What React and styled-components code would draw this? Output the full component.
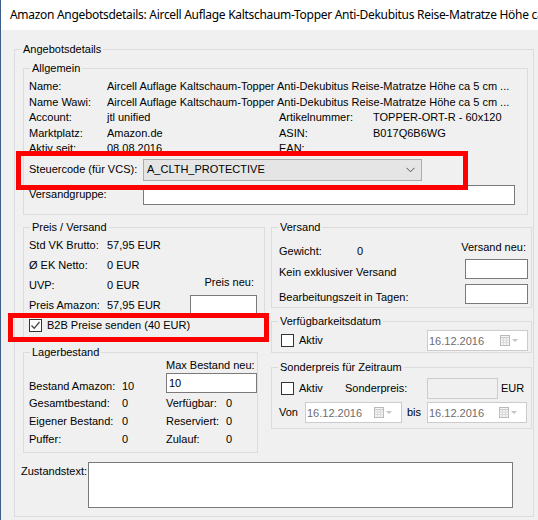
import React from "react";
import styled, { createGlobalStyle } from "styled-components";

const GlobalStyle = createGlobalStyle`
  html, body {
    margin: 0;
    padding: 0;
    background: #f0f0f0;
  }
`;

const Window = styled.div`
  position: relative;
  width: 538px;
  height: 520px;
  overflow: hidden;
  box-sizing: border-box;
  background: #f0f0f0;
  border-left: 1px solid #3b5f8a;
  font-family: "Liberation Sans", Arial, sans-serif;
  font-size: 11px;
  color: #000;
  display: flex;
  flex-direction: column;
`;

const TitleBar = styled.div`
  height: 30px;
  flex: 0 0 30px;
  background: #fff;
  padding: 0 0 2px 9px;
  box-sizing: border-box;
  display: flex;
  align-items: center;
  white-space: nowrap;
  overflow: hidden;
  font-family: "Noto Sans", "Open Sans", sans-serif;
  font-size: 12px;
  letter-spacing: -0.3px;
`;

const Body = styled.div`
  flex: 1;
  padding: 13px 0 0 13px;
`;

const Group = styled.fieldset`
  margin: 0;
  padding: 0;
  min-width: 0;
  box-sizing: border-box;
  border: 1px solid #dcdcdc;
  width: ${(p) => p.$w}px;
  height: ${(p) => p.$h}px;
  margin-top: ${(p) => p.$mt || 0}px;
`;

const Legend = styled.legend`
  margin-left: 6px;
  padding: 0 2px;
  line-height: 13px;
  font-size: 11px;
`;

const Inner = styled.div`
  display: flex;
  flex-direction: column;
  padding: ${(p) => p.$pad || "0"};
`;

const InfoGrid = styled.div`
  display: grid;
  grid-template-columns: 78px 172px 94px 1fr;
  grid-auto-rows: 15.5px;
  align-items: center;
  white-space: nowrap;
  line-height: 13px;

  .wide {
    grid-column: 2 / 5;
  }
`;

const FieldRow = styled.div`
  display: flex;
  align-items: center;
  margin-top: ${(p) => p.$mt || 0}px;
  line-height: 13px;
`;

const Label = styled.span`
  width: ${(p) => (p.$w ? `${p.$w}px` : "auto")};
  margin-left: ${(p) => p.$ml || 0}px;
  flex: 0 0 auto;
  white-space: nowrap;
  line-height: 13px;
`;

const Combo = styled.div`
  width: 279px;
  height: 22px;
  box-sizing: border-box;
  background: #e5e5e5;
  border: 1px solid #acacac;
  display: flex;
  align-items: center;
  justify-content: space-between;
  padding: 0 6px 0 3px;
  font-size: 11px;
`;

const TextBox = styled.div`
  width: ${(p) => p.$w}px;
  height: ${(p) => p.$h || 20}px;
  box-sizing: border-box;
  background: ${(p) => (p.$disabled ? "#f0f0f0" : "#fff")};
  border: 1px solid ${(p) => (p.$disabled ? "#cccccc" : "#7a7a7a")};
  padding: 2px 2px;
  line-height: 14px;
  font-size: 11px;
`;

const Middle = styled.div`
  display: flex;
  gap: 6px;
  margin-top: 6px;
`;

const Column = styled.div`
  display: flex;
  flex-direction: column;
`;

const PriceGrid = styled.div`
  display: grid;
  grid-template-columns: 78px auto;
  grid-auto-rows: 20px;
  align-items: center;
  white-space: nowrap;
  line-height: 13px;
`;

const PriceTop = styled.div`
  display: flex;
  justify-content: space-between;
  align-items: flex-end;
  padding: 1px 7px 0 5px;
`;

const NewPrice = styled.div`
  display: flex;
  flex-direction: column;
  align-items: flex-end;

  span {
    line-height: 13px;
    padding-right: 3px;
    margin-bottom: 6px;
  }
`;

const CheckRow = styled.label`
  display: flex;
  align-items: center;
  gap: 5px;
  width: ${(p) => (p.$w ? `${p.$w}px` : "auto")};
  margin: ${(p) => p.$m || "0"};
  line-height: 13px;
  white-space: nowrap;
`;

const Box = styled.span`
  width: 13px;
  height: 13px;
  box-sizing: border-box;
  border: 1px solid #333;
  background: #fff;
  display: flex;
  align-items: center;
  justify-content: center;
  flex: 0 0 13px;
`;

const StockGrid = styled.div`
  display: grid;
  grid-template-columns: 93px 44px 60px 1fr;
  grid-template-rows: 14px 20px 20px 17.5px 17.5px;
  align-items: center;
  white-space: nowrap;
  line-height: 13px;
  padding-left: 5px;

  .head {
    grid-column: 3 / 5;
    align-self: start;
  }
  .box {
    grid-column: 3 / 5;
    grid-row: 2;
  }
  .low {
    grid-row: 2;
    align-self: end;
  }
`;

const ShipGrid = styled.div`
  display: grid;
  grid-template-columns: 1fr 63px;
  grid-template-rows: 20px 20px 20px;
  row-gap: 5px;
  padding: 0 3px 0 7px;
  white-space: nowrap;
  line-height: 13px;

  .weight {
    grid-row: 1;
    grid-column: 1;
    align-self: end;
    margin-bottom: -4px;
    display: flex;
  }
  .neu {
    grid-row: 1;
    grid-column: 1 / 3;
    justify-self: end;
    align-self: end;
    padding-right: 2px;
  }
  .lbl {
    grid-column: 1;
    align-self: end;
  }
`;

const DateRow = styled.div`
  display: flex;
  align-items: center;
  justify-content: ${(p) => p.$justify || "flex-start"};
  padding: ${(p) => p.$pad || "0"};
  margin-top: ${(p) => p.$mt || 0}px;
  white-space: nowrap;
`;

const Picker = styled.div`
  width: ${(p) => p.$w}px;
  height: 21px;
  box-sizing: border-box;
  border: 1px solid #cccccc;
  background: #fff;
  color: #6d6d6d;
  display: flex;
  align-items: center;
  justify-content: space-between;
  padding: 0 8px 0 1px;
  font-size: 11px;
`;

const StateRow = styled.div`
  display: flex;
  margin: 9px 0 0 -2px;

  span {
    width: 67px;
    margin-top: 3px;
    line-height: 13px;
  }
`;

const Marker = styled.div`
  position: absolute;
  left: ${(p) => p.$x}px;
  top: ${(p) => p.$y}px;
  width: ${(p) => p.$w}px;
  height: ${(p) => p.$h}px;
  box-sizing: border-box;
  border: 5px solid #ff0000;
  pointer-events: none;
`;

const Chevron = () => (
  <svg width="9" height="6" viewBox="0 0 9 6">
    <polyline points="0.5,0.8 4.5,4.8 8.5,0.8" fill="none" stroke="#505050" strokeWidth="1" />
  </svg>
);

const Check = () => (
  <svg width="11" height="11" viewBox="0 0 11 11">
    <polyline points="1.5,5.5 4.2,8.3 9.5,2" fill="none" stroke="#444" strokeWidth="1.3" />
  </svg>
);

const CalendarIcon = () => (
  <svg width="19" height="11" viewBox="0 0 19 11">
    <rect x="0.5" y="0.5" width="9" height="10" fill="#f4f4f4" stroke="#b8b8b8" />
    <line x1="0.5" y1="2.5" x2="9.5" y2="2.5" stroke="#c8c8c8" />
    <line x1="0.5" y1="5" x2="9.5" y2="5" stroke="#dadada" />
    <line x1="0.5" y1="7.5" x2="9.5" y2="7.5" stroke="#dadada" />
    <line x1="3.5" y1="2.5" x2="3.5" y2="10.5" stroke="#dadada" />
    <line x1="6.5" y1="2.5" x2="6.5" y2="10.5" stroke="#dadada" />
    <polygon points="12,4 18,4 15,7" fill="#c4c4c4" />
  </svg>
);

const CheckBox = ({ checked }) => <Box>{checked && <Check />}</Box>;

const DatePicker = ({ w }) => (
  <Picker $w={w}>
    <span>16.12.2016</span>
    <CalendarIcon />
  </Picker>
);

export default function App() {
  return (
    <Window>
      <GlobalStyle />
      <TitleBar>
        <span>
          Amazon Angebotsdetails: Aircell Auflage Kaltschaum-Topper Anti-Dekubitus Reise-Matratze Höhe ca 5 cm
        </span>
      </TitleBar>
      <Body>
        <Group $w={520} $h={474}>
          <Legend>Angebotsdetails</Legend>
          <Inner $pad="6px 0 0 8px">
            <Group $w={505} $h={153}>
              <Legend>Allgemein</Legend>
              <Inner $pad="4px 0 0 5px">
                <InfoGrid>
                  <span>Name:</span>
                  <span className="wide">
                    Aircell Auflage Kaltschaum-Topper Anti-Dekubitus Reise-Matratze Höhe ca 5 cm ...
                  </span>
                  <span>Name Wawi:</span>
                  <span className="wide">
                    Aircell Auflage Kaltschaum-Topper Anti-Dekubitus Reise-Matratze Höhe ca 5 cm ...
                  </span>
                  <span>Account:</span>
                  <span>jtl unified</span>
                  <span>Artikelnummer:</span>
                  <span>TOPPER-ORT-R - 60x120</span>
                  <span>Marktplatz:</span>
                  <span>Amazon.de</span>
                  <span>ASIN:</span>
                  <span>B017Q6B6WG</span>
                  <span>Aktiv seit:</span>
                  <span>08.08.2016</span>
                  <span>EAN:</span>
                  <span></span>
                </InfoGrid>
                <FieldRow $mt={2}>
                  <Label $w={114}>Steuercode (für VCS):</Label>
                  <Combo>
                    <span>A_CLTH_PROTECTIVE</span>
                    <Chevron />
                  </Combo>
                </FieldRow>
                <FieldRow $mt={4}>
                  <Label $w={114}>Versandgruppe:</Label>
                  <TextBox $w={372} />
                </FieldRow>
              </Inner>
            </Group>

            <Middle>
              <Column>
                <Group $w={242} $h={118}>
                  <Legend>Preis / Versand</Legend>
                  <PriceTop>
                    <PriceGrid>
                      <span>Std VK Brutto:</span>
                      <span>57,95 EUR</span>
                      <span>Ø EK Netto:</span>
                      <span>0 EUR</span>
                      <span>UVP:</span>
                      <span>0 EUR</span>
                      <span>Preis Amazon:</span>
                      <span>57,95 EUR</span>
                    </PriceGrid>
                    <NewPrice>
                      <span>Preis neu:</span>
                      <TextBox $w={67} />
                    </NewPrice>
                  </PriceTop>
                  <CheckRow $m="4px 0 0 5px">
                    <CheckBox checked />
                    <span>B2B Preise senden (40 EUR)</span>
                  </CheckRow>
                </Group>

                <Group $w={235} $h={107} $mt={7}>
                  <Legend>Lagerbestand</Legend>
                  <StockGrid>
                    <span className="head">Max Bestand neu:</span>
                    <span className="low">Bestand Amazon:</span>
                    <span className="low">10</span>
                    <TextBox className="box" $w={91}>10</TextBox>
                    <span>Gesamtbestand:</span>
                    <span>0</span>
                    <span>Verfügbar:</span>
                    <span>0</span>
                    <span>Eigener Bestand:</span>
                    <span>0</span>
                    <span>Reserviert:</span>
                    <span>0</span>
                    <span>Puffer:</span>
                    <span>0</span>
                    <span>Zulauf:</span>
                    <span>0</span>
                  </StockGrid>
                </Group>
              </Column>

              <Column>
                <Group $w={261} $h={87}>
                  <Legend>Versand</Legend>
                  <ShipGrid>
                    <div className="weight">
                      <Label $w={78}>Gewicht:</Label>
                      <span>0</span>
                    </div>
                    <span className="neu">Versand neu:</span>
                    <span className="lbl">Kein exklusiver Versand</span>
                    <TextBox $w={63} />
                    <span className="lbl">Bearbeitungszeit in Tagen:</span>
                    <TextBox $w={63} />
                  </ShipGrid>
                </Group>

                <Group $w={261} $h={38} $mt={7}>
                  <Legend>Verfügbarkeitsdatum</Legend>
                  <DateRow $justify="space-between" $pad="2px 3px 0 9px">
                    <CheckRow>
                      <CheckBox />
                      <span>Aktiv</span>
                    </CheckRow>
                    <DatePicker w={101} />
                  </DateRow>
                </Group>

                <Group $w={261} $h={68} $mt={8}>
                  <Legend>Sonderpreis für Zeitraum</Legend>
                  <Inner $pad="4px 0 0 7px">
                    <DateRow>
                      <CheckRow $w={64} $m="0 0 0 2px">
                        <CheckBox />
                        <span>Aktiv</span>
                      </CheckRow>
                      <Label $w={82}>Sonderpreis:</Label>
                      <TextBox $w={71} $h={21} $disabled />
                      <Label $ml={3}>EUR</Label>
                    </DateRow>
                    <DateRow $mt={3}>
                      <Label $w={26}>Von</Label>
                      <DatePicker w={97} />
                      <Label $w={20} $ml={5}>bis</Label>
                      <DatePicker w={100} />
                    </DateRow>
                  </Inner>
                </Group>
              </Column>
            </Middle>

            <StateRow>
              <span>Zustandstext:</span>
              <TextBox $w={425} $h={46} />
            </StateRow>
          </Inner>
        </Group>
      </Body>

      <Marker $x={15} $y={151} $w={452} $h={39} />
      <Marker $x={7} $y={313} $w={261} $h={29} />
    </Window>
  );
}
